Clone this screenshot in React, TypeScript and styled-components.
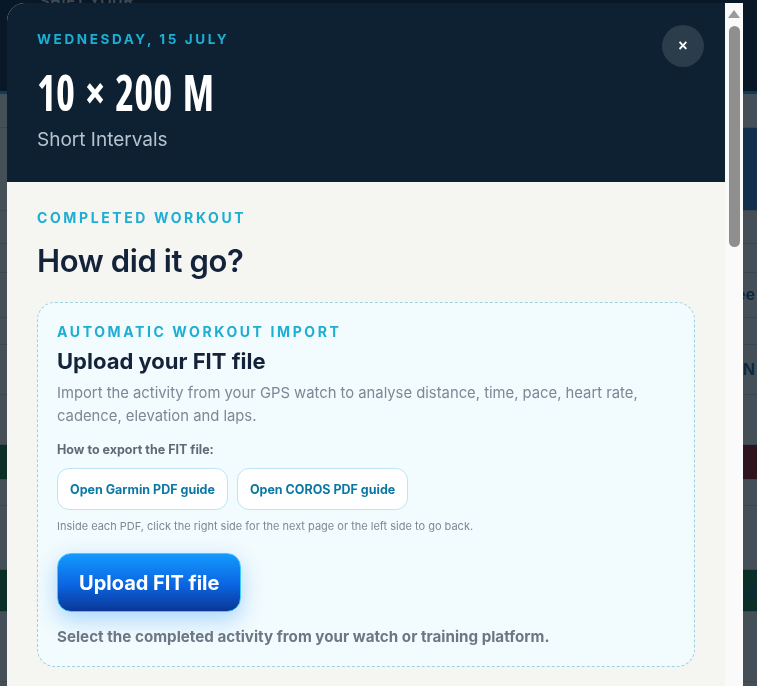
import React from 'react'
import styled, { createGlobalStyle } from 'styled-components'

const GlobalStyle = createGlobalStyle`
  html, body {
    margin: 0;
    padding: 0;
  }
  body {
    font-family: Inter, 'Noto Sans', sans-serif;
    background: #b4c0c8;
    overflow: hidden;
  }
  * {
    box-sizing: border-box;
  }
`

/* page behind the dialog */

const Page = styled.div`
  min-height: 686px;
  display: flex;
  flex-direction: column;
  background: #b4c0c8;
`

const PageHeader = styled.header`
  height: 94px;
  background: #15304a;
  border-bottom: 3px solid #2f86c8;
  padding: 0 40px;
`

const PageHeaderText = styled.div`
  margin-top: -7px;
  font-family: 'Liberation Sans', Arial, sans-serif;
  font-weight: 700;
  font-size: 14px;
  letter-spacing: 1px;
  color: #9fb0bf;
`

const Band = styled.div<{ $left: string; $right: string; $h: number }>`
  height: ${(p) => p.$h}px;
  background: linear-gradient(to right, ${(p) => p.$left} 50%, ${(p) => p.$right} 50%);
  border-bottom: 1px solid #9aa9b3;
  display: flex;
  align-items: center;
  justify-content: space-between;
  padding: 0 2px 0 0;
  font-family: 'Liberation Sans', Arial, sans-serif;
  font-weight: 700;
  font-size: 17px;
  color: #1b5a86;
`

/* dialog */

const Overlay = styled.div`
  position: fixed;
  inset: 0;
  background: rgba(2, 10, 18, 0.62);
  display: flex;
  align-items: flex-start;
  padding: 3px 14px 0 7px;
`

const Dialog = styled.div`
  flex: 1;
  height: 720px;
  display: flex;
  overflow: hidden;
  background: #f5f5f1;
  border-radius: 18px 0 0 0;
`

const Scroller = styled.div`
  flex: 1;
  overflow-y: auto;
`

const ScrollTrack = styled.div`
  width: 18px;
  flex-shrink: 0;
  background: #fafafa;
  display: flex;
  flex-direction: column;
  align-items: center;
  padding-top: 7px;
`

const ScrollArrow = styled.div`
  width: 0;
  height: 0;
  border-left: 6px solid transparent;
  border-right: 6px solid transparent;
  border-bottom: 8px solid #9a9a9a;
`

const ScrollThumb = styled.div`
  margin-top: 8px;
  width: 11px;
  height: 221px;
  border-radius: 6px;
  background: #8f8f8f;
`

const Header = styled.div`
  background: #0e2133;
  display: flex;
  justify-content: space-between;
  align-items: flex-start;
  padding: 27px 30px 30px;
`

const Eyebrow = styled.div<{ $size?: number }>`
  font-weight: 700;
  font-size: ${(p) => p.$size || 14}px;
  line-height: 18px;
  letter-spacing: 2.6px;
  text-transform: uppercase;
  color: #1eaed4;
`

const Title = styled.h1`
  margin: 18px 0 0;
  font-family: 'Open Sans', 'Liberation Sans', sans-serif;
  font-stretch: 75%;
  font-weight: 700;
  font-size: 50px;
  line-height: 52px;
  color: #ffffff;
  word-spacing: 4px;
  transform: scaleX(0.81);
  transform-origin: left center;
`

const Subtitle = styled.div`
  margin-top: 10px;
  font-size: 19px;
  line-height: 24px;
  color: #b7c3ce;
`

const CloseButton = styled.button`
  width: 42px;
  height: 42px;
  margin: -5px -9px 0 0;
  border: none;
  border-radius: 50%;
  background: rgba(255, 255, 255, 0.12);
  color: #ffffff;
  font-family: 'Liberation Sans', Arial, sans-serif;
  font-weight: 700;
  font-size: 16px;
  line-height: 42px;
  padding: 0;
  flex-shrink: 0;
`

const Body = styled.div`
  padding: 27px 30px 40px;
`

const Heading = styled.h2`
  margin: 14px 0 0;
  font-size: 31px;
  line-height: 40px;
  font-weight: 600;
  color: #14233a;
  letter-spacing: -0.4px;
`

const ImportCard = styled.section`
  margin-top: 21px;
  border: 1px dashed #9fd2de;
  border-radius: 18px;
  background: #f2fbfd;
  padding: 20px 19px 19px;
`

const CardTitle = styled.h3`
  margin: 6px 0 0;
  font-size: 22px;
  line-height: 28px;
  font-weight: 700;
  color: #14233a;
`

const Description = styled.p`
  margin: 7px 0 0;
  font-size: 14.8px;
  line-height: 23px;
  color: #7c8895;
`

const SmallLabel = styled.div`
  margin-top: 13px;
  font-size: 12.5px;
  line-height: 18px;
  font-weight: 700;
  color: #5e6a76;
`

const GuideRow = styled.div`
  display: flex;
  gap: 9px;
  margin-top: 9px;
`

const GuideButton = styled.button`
  height: 42px;
  padding: 0 12px;
  border: 1px solid #bde5f6;
  border-radius: 12px;
  background: #ffffff;
  color: #0b78a4;
  font-family: inherit;
  font-weight: 700;
  font-size: 12.5px;
`

const Hint = styled.div`
  margin-top: 8px;
  font-size: 11px;
  line-height: 16px;
  color: #7d8995;
`

const UploadButton = styled.button`
  margin-top: 19px;
  height: 59px;
  padding: 0 21px;
  border: 1.5px solid #3fc9ff;
  border-radius: 14px;
  background: linear-gradient(180deg, #1599ff 0%, #0a64e0 55%, #0a3796 100%);
  color: #ffffff;
  font-family: inherit;
  font-weight: 700;
  font-size: 20px;
  box-shadow: 0 8px 22px rgba(24, 140, 255, 0.33);
`

const Note = styled.div`
  margin-top: 15px;
  font-size: 15.2px;
  line-height: 20px;
  font-weight: 700;
  color: #6b7785;
`

const ManualCard = styled.section`
  margin-top: 28px;
  border: 1px solid #e2e2dc;
  border-radius: 18px;
  background: #ffffff;
  padding: 20px;
`

const FieldGrid = styled.div`
  display: grid;
  grid-template-columns: 1fr 1fr;
  gap: 14px;
  margin-top: 16px;
`

const Field = styled.label`
  display: flex;
  flex-direction: column;
  gap: 6px;
  font-size: 13px;
  font-weight: 700;
  color: #5e6a76;
`

const Input = styled.input`
  height: 46px;
  border: 1px solid #d9dde2;
  border-radius: 12px;
  padding: 0 12px;
  font-family: inherit;
  font-size: 15px;
`

const Notes = styled.textarea`
  height: 140px;
  border: 1px solid #d9dde2;
  border-radius: 12px;
  padding: 12px;
  font-family: inherit;
  font-size: 15px;
  resize: none;
`

const SaveButton = styled.button`
  margin-top: 24px;
  width: 100%;
  height: 54px;
  border: none;
  border-radius: 14px;
  background: #14233a;
  color: #ffffff;
  font-family: inherit;
  font-weight: 700;
  font-size: 17px;
`

const grey = '#b4c0c8'

const bands = [
  { left: grey, right: grey, h: 34, text: '' },
  { left: grey, right: '#2d6cae', h: 83, text: '' },
  { left: grey, right: grey, h: 33, text: '' },
  { left: grey, right: grey, h: 29, text: '' },
  { left: grey, right: grey, h: 45, text: 'ee' },
  { left: grey, right: grey, h: 27, text: '' },
  { left: grey, right: grey, h: 50, text: 'N' },
  { left: grey, right: grey, h: 50, text: '' },
  { left: '#1c6c4a', right: '#7a2336', h: 35, text: '' },
  { left: grey, right: grey, h: 26, text: '' },
  { left: grey, right: grey, h: 64, text: '' },
  { left: '#1c6c4a', right: '#1d6b4f', h: 42, text: 'Ru' },
  { left: grey, right: grey, h: 70, text: '' },
]

const App: React.FC = () => {
  return (
    <>
      <GlobalStyle />
      <Page>
        <PageHeader>
          <PageHeaderText>SHIFT YOUR</PageHeaderText>
        </PageHeader>
        {bands.map((b, i) => (
          <Band key={i} $left={b.left} $right={b.right} $h={b.h}>
            <span />
            {b.text}
          </Band>
        ))}
      </Page>

      <Overlay>
        <Dialog>
          <Scroller>
            <Header>
              <div>
                <Eyebrow $size={13.5}>Wednesday, 15 July</Eyebrow>
                <Title>10 × 200 M</Title>
                <Subtitle>Short Intervals</Subtitle>
              </div>
              <CloseButton aria-label="Close">×</CloseButton>
            </Header>

            <Body>
              <Eyebrow>Completed workout</Eyebrow>
              <Heading>How did it go?</Heading>

              <ImportCard>
                <Eyebrow>Automatic workout import</Eyebrow>
                <CardTitle>Upload your FIT file</CardTitle>
                <Description>
                  Import the activity from your GPS watch to analyse distance, time, pace, heart rate,
                  cadence, elevation and laps.
                </Description>
                <SmallLabel>How to export the FIT file:</SmallLabel>
                <GuideRow>
                  <GuideButton>Open Garmin PDF guide</GuideButton>
                  <GuideButton>Open COROS PDF guide</GuideButton>
                </GuideRow>
                <Hint>Inside each PDF, click the right side for the next page or the left side to go back.</Hint>
                <UploadButton>Upload FIT file</UploadButton>
                <Note>Select the completed activity from your watch or training platform.</Note>
              </ImportCard>

              <ManualCard>
                <Eyebrow>Manual entry</Eyebrow>
                <CardTitle>Log it yourself</CardTitle>
                <FieldGrid>
                  <Field>
                    Distance (km)
                    <Input defaultValue="" />
                  </Field>
                  <Field>
                    Duration
                    <Input defaultValue="" />
                  </Field>
                  <Field>
                    Average pace
                    <Input defaultValue="" />
                  </Field>
                  <Field>
                    Average heart rate
                    <Input defaultValue="" />
                  </Field>
                </FieldGrid>
              </ManualCard>

              <ManualCard>
                <Eyebrow>Feel</Eyebrow>
                <CardTitle>How hard was it?</CardTitle>
                <FieldGrid>
                  <Field>
                    Effort (1–10)
                    <Input defaultValue="" />
                  </Field>
                  <Field>
                    Sleep last night
                    <Input defaultValue="" />
                  </Field>
                </FieldGrid>
                <Field style={{ marginTop: 14 }}>
                  Notes
                  <Notes />
                </Field>
              </ManualCard>

              <SaveButton>Save workout</SaveButton>
            </Body>
          </Scroller>
          <ScrollTrack aria-hidden>
            <ScrollArrow />
            <ScrollThumb />
          </ScrollTrack>
        </Dialog>
      </Overlay>
    </>
  )
}

export default App
